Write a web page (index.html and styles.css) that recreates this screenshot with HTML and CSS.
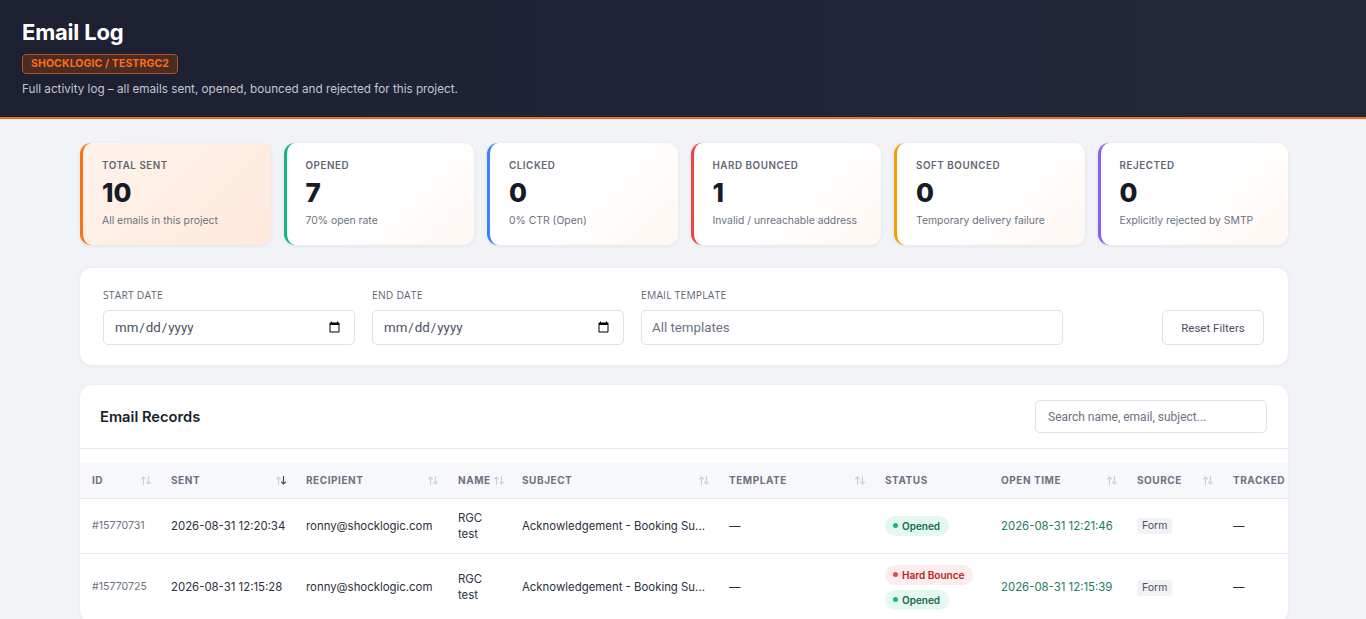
FILE: index.html
```html
<!DOCTYPE html>
<html lang="en">
<head>
<meta charset="utf-8">
<title>Email Log</title>
<link rel="stylesheet" href="styles.css">
</head>
<body>
<header class="topbar">
  <h1 class="title">Email Log</h1>
  <span class="badge">SHOCKLOGIC / TESTRGC2</span>
  <p class="subtitle">Full activity log – all emails sent, opened, bounced and rejected for this project.</p>
</header>

<main class="page">
  <section class="stats">
    <div class="stat stat-total">
      <div class="stat-label">TOTAL SENT</div>
      <div class="stat-value">10</div>
      <div class="stat-sub">All emails in this project</div>
    </div>
    <div class="stat stat-opened">
      <div class="stat-label">OPENED</div>
      <div class="stat-value">7</div>
      <div class="stat-sub">70% open rate</div>
    </div>
    <div class="stat stat-clicked">
      <div class="stat-label">CLICKED</div>
      <div class="stat-value">0</div>
      <div class="stat-sub">0% CTR (Open)</div>
    </div>
    <div class="stat stat-hard">
      <div class="stat-label">HARD BOUNCED</div>
      <div class="stat-value">1</div>
      <div class="stat-sub">Invalid / unreachable address</div>
    </div>
    <div class="stat stat-soft">
      <div class="stat-label">SOFT BOUNCED</div>
      <div class="stat-value">0</div>
      <div class="stat-sub">Temporary delivery failure</div>
    </div>
    <div class="stat stat-rejected">
      <div class="stat-label">REJECTED</div>
      <div class="stat-value">0</div>
      <div class="stat-sub">Explicitly rejected by SMTP</div>
    </div>
  </section>

  <section class="filters">
    <div class="field">
      <label class="field-label">START DATE</label>
      <input class="field-input" type="date">
    </div>
    <div class="field">
      <label class="field-label">END DATE</label>
      <input class="field-input" type="date">
    </div>
    <div class="field">
      <label class="field-label">EMAIL TEMPLATE</label>
      <input class="field-input" type="text" placeholder="All templates">
    </div>
    <div class="field field-btn">
      <button class="reset-btn" type="button">Reset Filters</button>
    </div>
  </section>

  <section class="records">
    <div class="records-head">
      <h2 class="records-title">Email Records</h2>
      <input class="search" type="text" placeholder="Search name, email, subject...">
    </div>
    <div class="table-wrap">
      <table class="log">
        <colgroup>
          <col class="c-id"><col class="c-sent"><col class="c-rcpt"><col class="c-name"><col class="c-subj">
          <col class="c-tmpl"><col class="c-status"><col class="c-open"><col class="c-src"><col class="c-trk">
        </colgroup>
        <thead>
          <tr>
            <th><div class="th">ID<svg class="sort" viewBox="0 0 10 9"><path d="M2.5 8.5V1M0.6 2.9L2.5 1l1.9 1.9"/><path d="M7.5 0.5V8M5.6 6.1L7.5 8l1.9-1.9"/></svg></div></th>
            <th><div class="th">SENT<svg class="sort" viewBox="0 0 10 9"><path d="M2.5 8.5V1M0.6 2.9L2.5 1l1.9 1.9"/><path class="on" d="M7.5 0.5V8M5.6 6.1L7.5 8l1.9-1.9"/></svg></div></th>
            <th><div class="th">RECIPIENT<svg class="sort" viewBox="0 0 10 9"><path d="M2.5 8.5V1M0.6 2.9L2.5 1l1.9 1.9"/><path d="M7.5 0.5V8M5.6 6.1L7.5 8l1.9-1.9"/></svg></div></th>
            <th><div class="th th-tight">NAME<svg class="sort" viewBox="0 0 10 9"><path d="M2.5 8.5V1M0.6 2.9L2.5 1l1.9 1.9"/><path d="M7.5 0.5V8M5.6 6.1L7.5 8l1.9-1.9"/></svg></div></th>
            <th><div class="th">SUBJECT<svg class="sort" viewBox="0 0 10 9"><path d="M2.5 8.5V1M0.6 2.9L2.5 1l1.9 1.9"/><path d="M7.5 0.5V8M5.6 6.1L7.5 8l1.9-1.9"/></svg></div></th>
            <th><div class="th">TEMPLATE<svg class="sort" viewBox="0 0 10 9"><path d="M2.5 8.5V1M0.6 2.9L2.5 1l1.9 1.9"/><path d="M7.5 0.5V8M5.6 6.1L7.5 8l1.9-1.9"/></svg></div></th>
            <th><div class="th">STATUS</div></th>
            <th><div class="th">OPEN TIME<svg class="sort" viewBox="0 0 10 9"><path d="M2.5 8.5V1M0.6 2.9L2.5 1l1.9 1.9"/><path d="M7.5 0.5V8M5.6 6.1L7.5 8l1.9-1.9"/></svg></div></th>
            <th><div class="th">SOURCE<svg class="sort" viewBox="0 0 10 9"><path d="M2.5 8.5V1M0.6 2.9L2.5 1l1.9 1.9"/><path d="M7.5 0.5V8M5.6 6.1L7.5 8l1.9-1.9"/></svg></div></th>
            <th><div class="th">TRACKED</div></th>
          </tr>
        </thead>
        <tbody>
          <tr>
            <td class="id">#15770731</td>
            <td class="nw">2026-08-31 12:20:34</td>
            <td class="nw">ronny@shocklogic.com</td>
            <td>RGC test</td>
            <td class="subj">Acknowledgement - Booking Su...</td>
            <td>—</td>
            <td><div class="pills"><span class="pill pill-open"><i class="dot"></i>Opened</span></div></td>
            <td class="otime nw">2026-08-31 12:21:46</td>
            <td><span class="tag">Form</span></td>
            <td>—</td>
          </tr>
          <tr>
            <td class="id">#15770725</td>
            <td class="nw">2026-08-31 12:15:28</td>
            <td class="nw">ronny@shocklogic.com</td>
            <td>RGC test</td>
            <td class="subj">Acknowledgement - Booking Su...</td>
            <td>—</td>
            <td><div class="pills"><span class="pill pill-bounce"><i class="dot"></i>Hard Bounce</span><span class="pill pill-open"><i class="dot"></i>Opened</span></div></td>
            <td class="otime nw">2026-08-31 12:15:39</td>
            <td><span class="tag">Form</span></td>
            <td>—</td>
          </tr>
        </tbody>
      </table>
    </div>
  </section>
</main>
</body>
</html>
```

FILE: styles.css
```css
* { box-sizing: border-box; }

html, body {
  margin: 0;
  padding: 0;
}

body {
  font-family: Inter, "Noto Sans", "Liberation Sans", sans-serif;
  background: #f2f3f7;
  color: #1f2430;
}

/* Header */
.topbar {
  background: linear-gradient(90deg, #1c2031 0%, #20253a 60%, #232839 100%);
  border-bottom: 2px solid #f26a1b;
  padding: 19px 22px 20px;
}

.title {
  margin: 0;
  font-size: 22px;
  line-height: 26px;
  font-weight: 700;
  color: #ffffff;
  letter-spacing: -0.2px;
}

.badge {
  display: inline-block;
  margin-top: 9px;
  height: 20px;
  line-height: 18px;
  padding: 0 8px;
  border: 1px solid #b4501c;
  border-radius: 4px;
  background: #4a2c25;
  color: #ff6d14;
  font-size: 10.5px;
  font-weight: 700;
  letter-spacing: 0.1px;
}

.subtitle {
  margin: 7px 0 0;
  font-size: 11.7px;
  line-height: 16px;
  color: #c3c6cf;
}

/* Page */
.page {
  max-width: 1208px;
  margin: 0 auto;
  padding: 24px 0 0;
  position: relative;
  left: 1px;
}

/* Stats */
.stats {
  display: grid;
  grid-template-columns: repeat(6, 1fr);
  gap: 13px;
}

.stat {
  height: 102px;
  border-radius: 11px;
  border-left: 3px solid;
  padding: 16px 18px 0 19px;
  background: linear-gradient(135deg, #ffffff 55%, #fff7f1 100%);
  box-shadow: 0 1px 4px rgba(20, 24, 40, 0.07);
}

.stat-total { border-left-color: #f97316; background: linear-gradient(135deg, #fff3ec 0%, #ffe9dc 100%); }
.stat-opened { border-left-color: #10b981; }
.stat-clicked { border-left-color: #3b82f6; }
.stat-hard { border-left-color: #ef4444; }
.stat-soft { border-left-color: #f59e0b; }
.stat-rejected { border-left-color: #8b5cf6; }

.stat-label {
  font-size: 9.8px;
  line-height: 13px;
  font-weight: 600;
  letter-spacing: 0.55px;
  color: #5f6673;
}

.stat-value {
  margin-top: 6px;
  font-size: 26px;
  line-height: 30px;
  font-weight: 800;
  color: #161b27;
}

.stat-sub {
  margin-top: 6px;
  font-size: 10.4px;
  line-height: 14px;
  color: #6b7280;
}

/* Filters */
.filters {
  margin-top: 23px;
  background: #ffffff;
  border-radius: 12px;
  box-shadow: 0 1px 4px rgba(20, 24, 40, 0.06);
  padding: 20px 24px 20px 23px;
  display: grid;
  grid-template-columns: 252px 252px 422px 1fr;
  column-gap: 17px;
  align-items: end;
}

.field {
  display: flex;
  flex-direction: column;
}

.field-label {
  font-family: "Open Sans", "Noto Sans", sans-serif;
  font-size: 10.3px;
  line-height: 14px;
  color: #5f6673;
  letter-spacing: 0.2px;
  margin-bottom: 8px;
}

.field-input {
  height: 35px;
  border: 1px solid #dfe2e8;
  border-radius: 5px;
  background: #ffffff;
  padding: 0 11px 0 10px;
  font-family: Roboto, "Liberation Sans", sans-serif;
  font-size: 13.3px;
  color: #4b5160;
  outline: none;
}

.field-input::placeholder { color: #6b7280; }

.field-btn {
  align-items: flex-end;
}

.reset-btn {
  height: 35px;
  width: 102px;
  border: 1px solid #dfe2e8;
  border-radius: 5px;
  background: #ffffff;
  font-family: Roboto, "Liberation Sans", sans-serif;
  font-size: 11.5px;
  color: #4b5160;
  padding: 0;
}

/* Records */
.records {
  margin-top: 20px;
  background: #ffffff;
  border-radius: 12px;
  box-shadow: 0 1px 4px rgba(20, 24, 40, 0.06);
  overflow: hidden;
}

.records-head {
  display: flex;
  align-items: center;
  justify-content: space-between;
  padding: 15px 21px 15px 20px;
  border-bottom: 1px solid #e6e8ed;
}

.records-title {
  margin: 0;
  font-size: 14.7px;
  font-weight: 600;
  color: #1a1f2c;
}

.search {
  width: 232px;
  height: 33px;
  border: 1px solid #dfe2e8;
  border-radius: 5px;
  padding: 0 12px;
  font-family: Roboto, "Liberation Sans", sans-serif;
  font-size: 12px;
  color: #4b5160;
  outline: none;
}

.search::placeholder { color: #6b7280; }

.table-wrap {
  padding-top: 14px;
  overflow: hidden;
}

.log {
  border-collapse: collapse;
  table-layout: fixed;
  width: 1241px;
}

.c-id { width: 79px; }
.c-sent { width: 135px; }
.c-rcpt { width: 152px; }
.c-name { width: 64px; }
.c-subj { width: 207px; }
.c-tmpl { width: 156px; }
.c-status { width: 116px; }
.c-open { width: 136px; }
.c-src { width: 96px; }
.c-trk { width: 100px; }

.log thead th {
  background: #f7f8fb;
  border-bottom: 1px solid #e6e8ed;
  height: 35px;
  padding: 0 8px 0 12px;
  text-align: left;
  font-weight: 700;
}

.th {
  display: flex;
  align-items: center;
  justify-content: space-between;
  font-size: 10px;
  letter-spacing: 0.55px;
  color: #6b7280;
  white-space: nowrap;
}

.th-tight {
  justify-content: flex-start;
  gap: 3px;
}

.sort {
  width: 10px;
  height: 9px;
  flex: none;
}

.sort path {
  fill: none;
  stroke: #c9cdd5;
  stroke-width: 1.1;
  stroke-linecap: round;
  stroke-linejoin: round;
}

.sort path.on { stroke: #4b5160; stroke-width: 1.3; }

.log tbody td {
  padding: 11px 12px;
  border-bottom: 1px solid #eceef2;
  font-size: 11.4px;
  line-height: 16px;
  color: #2b303c;
  vertical-align: middle;
}

.log tbody td.nw { white-space: nowrap; }

.log tbody td.id {
  font-size: 10.6px;
  color: #6b7280;
}

.log tbody td.subj {
  white-space: nowrap;
  overflow: hidden;
}

.log tbody td.otime {
  color: #1f7a63;
}

.pills {
  display: flex;
  flex-direction: column;
  align-items: flex-start;
  gap: 5px;
}

.pill {
  display: inline-flex;
  align-items: center;
  gap: 4px;
  height: 20px;
  padding: 0 9px 0 8px;
  border-radius: 10px;
  font-size: 10px;
  font-weight: 600;
}

.pill .dot {
  width: 5px;
  height: 5px;
  border-radius: 50%;
  display: inline-block;
}

.pill-open { background: #e5f8ef; color: #0f6b4c; }
.pill-open .dot { background: #10b981; }

.pill-bounce { background: #fdeced; color: #b42323; }
.pill-bounce .dot { background: #ef4444; }

.tag {
  display: inline-block;
  padding: 1px 5px;
  border-radius: 3px;
  background: #f1f2f5;
  color: #4b5160;
  font-size: 10.5px;
  line-height: 14px;
}
```
